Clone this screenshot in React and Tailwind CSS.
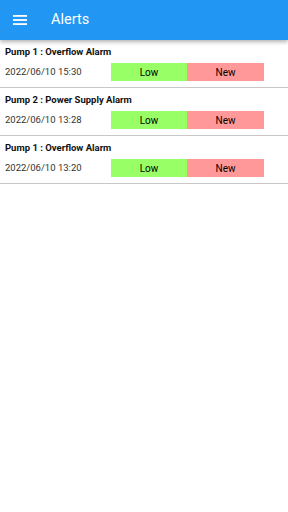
const alerts = [
  { title: 'Pump 1 : Overflow Alarm', time: '2022/06/10 15:30' },
  { title: 'Pump 2 : Power Supply Alarm', time: '2022/06/10 13:28' },
  { title: 'Pump 1 : Overflow Alarm', time: '2022/06/10 13:20' },
]

export default function App() {
  return (
    <div className="w-[288px] h-[512px] bg-white font-['Roboto',sans-serif] overflow-hidden">
      {/* App bar */}
      <div className="relative z-10 h-[40px] bg-[#2196f3] flex items-center shadow-[0_2px_4px_rgba(0,0,0,0.3)]">
        <svg className="ml-[13px] w-[14px] h-[12px]" viewBox="0 0 14 12" fill="#fff">
          <rect x="0" y="1" width="14" height="1.8" />
          <rect x="0" y="5.1" width="14" height="1.8" />
          <rect x="0" y="9.2" width="14" height="1.8" />
        </svg>
        <span className="ml-[24px] text-white text-[14.5px] leading-none">Alerts</span>
      </div>

      {alerts.map((a, i) => (
        <div key={i} className="h-[48px] border-b border-[#c8c8c8] px-[5px] pt-[6px]">
          <div className="text-[9.5px] font-bold text-[#111] leading-[12px]">{a.title}</div>
          <div className="flex items-center mt-[5px]">
            <span className="w-[106px] text-[9.5px] text-[#333] leading-[12px]">{a.time}</span>
            <div className="flex h-[18px] text-[10px] text-black">
              <div className="w-[76px] bg-[#99ff66] flex items-center justify-center">Low</div>
              <div className="w-[77px] bg-[#ff9999] flex items-center justify-center">New</div>
            </div>
          </div>
        </div>
      ))}
    </div>
  )
}
